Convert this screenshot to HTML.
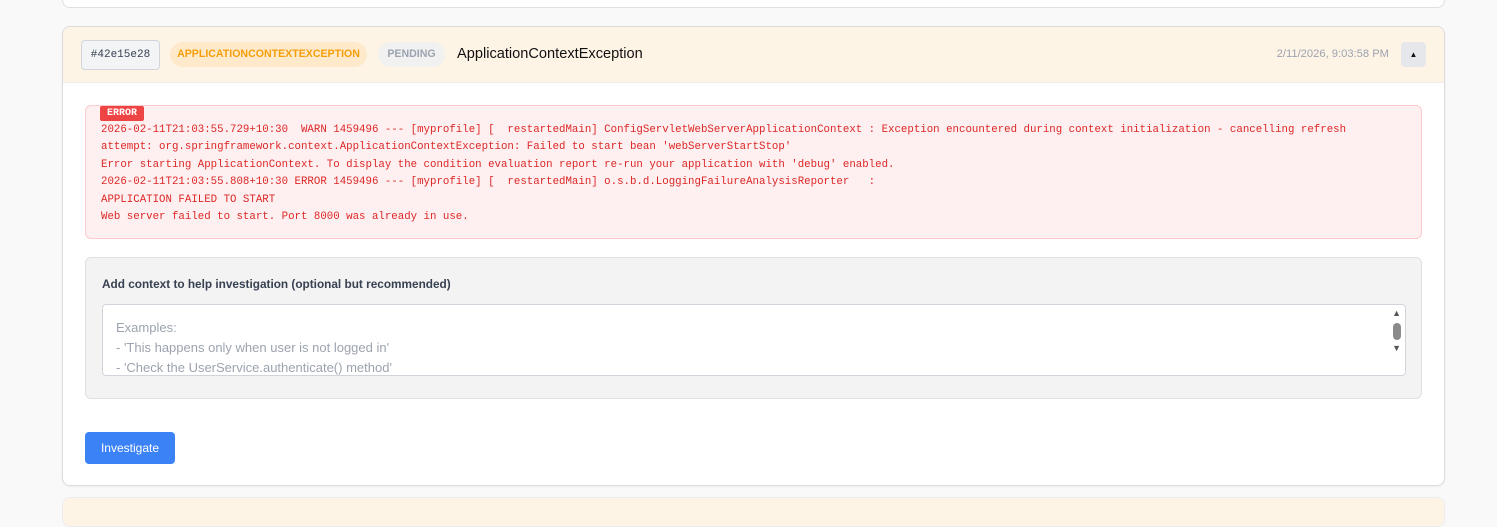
<!DOCTYPE html>
<html><head><style>
*{box-sizing:border-box;margin:0;padding:0}
body{width:1497px;height:513px;background:#f9f9f9;font-family:"Liberation Sans",sans-serif;position:relative;overflow:hidden}
.abs{position:absolute}
.mono{font-family:"Liberation Mono",monospace}
</style></head><body>
<div class="abs" style="left:62px;top:-10px;width:1383px;height:18px;background:#fff;border:1px solid #e0e0e0;border-radius:8px"></div>
<div class="abs" style="left:62px;top:26px;width:1383px;height:460px;background:#fff;border:1px solid #dcdcdc;border-radius:8px;overflow:hidden;box-shadow:0 1px 2px rgba(0,0,0,.05)">
  <div class="abs" style="left:0;top:0;width:100%;height:56px;background:#fef4e6;border-bottom:1px solid #ececec"></div>
</div>
<div class="abs mono" style="left:81px;top:40px;width:79px;height:30px;background:#f3f4f6;border:1px solid #d1d5db;border-radius:4px;font-size:11px;color:#374151;line-height:28px;text-align:center">#42e15e28</div>
<div class="abs" style="left:170px;top:42px;width:197px;height:25px;background:#feeacb;border-radius:13px;font-size:10.6px;font-weight:bold;color:#f59e0b;line-height:25px;text-align:center">APPLICATIONCONTEXTEXCEPTION</div>
<div class="abs" style="left:378px;top:42px;width:67px;height:25px;background:#f1f1f1;border-radius:13px;font-size:10.6px;font-weight:bold;color:#9ca3af;line-height:25px;text-align:center">PENDING</div>
<div class="abs" style="left:457px;top:44px;font-size:14.6px;color:#111;line-height:20px">ApplicationContextException</div>
<div class="abs" style="right:108px;top:47px;font-size:11.2px;color:#9ca3af;line-height:14px">2/11/2026, 9:03:58 PM</div>
<div class="abs" style="left:1401px;top:42px;width:25px;height:25px;background:#e5e7eb;border-radius:4px;font-size:8px;line-height:25px;text-align:center;color:#111">▲</div>

<div class="abs" style="left:85px;top:105px;width:1337px;height:134px;background:#fef0f0;border:1px solid #fbcaca;border-radius:6px"></div>
<div class="abs mono" style="left:100px;top:106px;width:44px;height:15px;background:#ef4444;color:#fff;font-size:10px;font-weight:bold;line-height:15px;text-align:center;border-radius:2px">ERROR</div>
<pre class="abs mono" style="left:101px;top:122px;font-size:10.75px;line-height:17.4px;color:#dc2626">2026-02-11T21:03:55.729+10:30  WARN 1459496 --- [myprofile] [  restartedMain] ConfigServletWebServerApplicationContext : Exception encountered during context initialization - cancelling refresh
attempt: org.springframework.context.ApplicationContextException: Failed to start bean 'webServerStartStop'
Error starting ApplicationContext. To display the condition evaluation report re-run your application with 'debug' enabled.
2026-02-11T21:03:55.808+10:30 ERROR 1459496 --- [myprofile] [  restartedMain] o.s.b.d.LoggingFailureAnalysisReporter   :
APPLICATION FAILED TO START
Web server failed to start. Port 8000 was already in use.</pre>

<div class="abs" style="left:85px;top:257px;width:1337px;height:142px;background:#f3f3f3;border:1px solid #e0e0e0;border-radius:6px"></div>
<div class="abs" style="left:102px;top:276px;font-size:11.8px;font-weight:bold;color:#374151;line-height:16px">Add context to help investigation (optional but recommended)</div>
<div class="abs" style="left:102px;top:304px;width:1304px;height:72px;background:#fff;border:1px solid #d1d5db;border-radius:4px;overflow:hidden">
  <div class="abs" style="left:13px;top:13px;font-size:13px;color:#9ca3af;line-height:20px;white-space:pre">Examples:
- 'This happens only when user is not logged in'
- 'Check the UserService.authenticate() method'</div>
  <div class="abs" style="right:4px;top:3px;font-size:9px;color:#555">▲</div>
  <div class="abs" style="right:4px;top:18px;width:8px;height:17px;background:#8a8a8a;border-radius:4px"></div>
  <div class="abs" style="right:4px;top:38px;font-size:9px;color:#555">▼</div>
</div>
<div class="abs" style="left:85px;top:432px;width:90px;height:32px;background:#3b82f6;border-radius:4px;color:#fff;font-size:12px;line-height:32px;text-align:center">Investigate</div>

<div class="abs" style="left:62px;top:497px;width:1383px;height:30px;background:#fef4e6;border:1px solid #ececec;border-radius:8px"></div>
</body></html>
